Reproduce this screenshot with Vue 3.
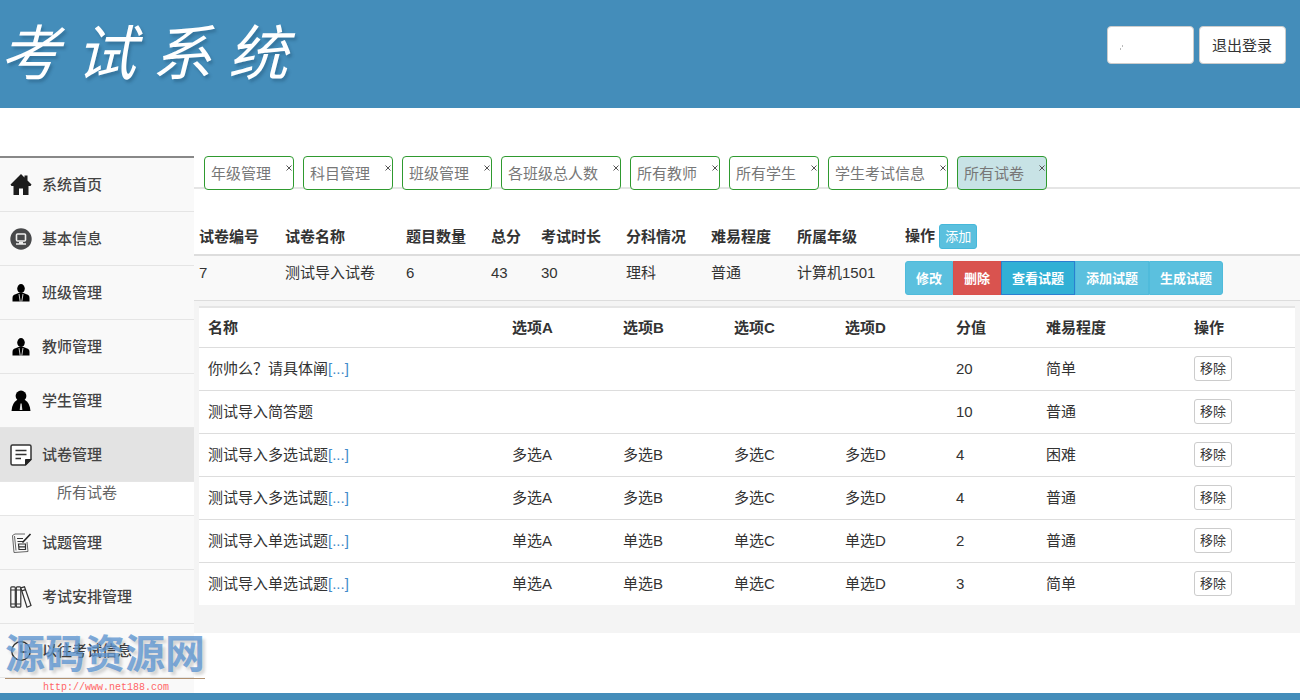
<script setup>
const logo = ['考', '试', '系', '统']

const menu = [
  { icon: 'home', label: '系统首页' },
  { icon: 'info', label: '基本信息' },
  { icon: 'person', label: '班级管理' },
  { icon: 'person', label: '教师管理' },
  { icon: 'student', label: '学生管理' },
  { icon: 'paper', label: '试卷管理', active: true, children: ['所有试卷'] },
  { icon: 'edit', label: '试题管理' },
  { icon: 'books', label: '考试安排管理' },
  { icon: 'clock', label: '以往考试信息' },
]

const tabs = ['年级管理', '科目管理', '班级管理', '各班级总人数', '所有教师', '所有学生', '学生考试信息', '所有试卷']

const share = (list) => {
  const total = list.reduce((a, b) => a + b, 0)
  return list.map((w) => (w / total) * 100 + '%')
}
const paperCols = share([86, 121, 85, 50, 85, 85, 86, 108, 400])
const questionCols = share([304, 111, 111, 111, 111, 90, 148, 110])

const paperHead = ['试卷编号', '试卷名称', '题目数量', '总分', '考试时长', '分科情况', '难易程度', '所属年级']
const paper = ['7', '测试导入试卷', '6', '43', '30', '理科', '普通', '计算机1501']
const actions = [
  { label: '修改', kind: 'info' },
  { label: '删除', kind: 'danger' },
  { label: '查看试题', kind: 'current' },
  { label: '添加试题', kind: 'info' },
  { label: '生成试题', kind: 'info' },
]

const questionHead = ['名称', '选项A', '选项B', '选项C', '选项D', '分值', '难易程度', '操作']
const questions = [
  { name: '你帅么？请具体阐', more: true, options: ['', '', '', ''], score: 20, level: '简单' },
  { name: '测试导入简答题', more: false, options: ['', '', '', ''], score: 10, level: '普通' },
  { name: '测试导入多选试题', more: true, options: ['多选A', '多选B', '多选C', '多选D'], score: 4, level: '困难' },
  { name: '测试导入多选试题', more: true, options: ['多选A', '多选B', '多选C', '多选D'], score: 4, level: '普通' },
  { name: '测试导入单选试题', more: true, options: ['单选A', '单选B', '单选C', '单选D'], score: 2, level: '普通' },
  { name: '测试导入单选试题', more: true, options: ['单选A', '单选B', '单选C', '单选D'], score: 3, level: '简单' },
]
</script>

<template>
  <div class="page">
    <header class="top">
      <h1 class="logo"><span v-for="c in logo" :key="c">{{ c }}</span></h1>
      <div class="account">
        <button type="button" class="btn-top" aria-label="当前用户">
          <svg width="4" height="6" viewBox="0 0 4 6"><path d="M0 5h1M2 2h1" stroke="#777" /></svg>
        </button>
        <button type="button" class="btn-top">退出登录</button>
      </div>
    </header>

    <div class="body">
      <nav class="side">
        <template v-for="m in menu" :key="m.label">
          <a href="#" class="item" :class="{ active: m.active }">
            <svg class="icon" width="22" height="22" viewBox="0 0 22 22" aria-hidden="true">
              <g v-if="m.icon === 'home'" fill="#1c1c1c">
                <path d="M11 0 0.5 10.5 1.5 12H3.5V21H9V14.5H13V21H18.5V12H20.5L21.5 10.5 17.5 6.5V1.5H14.5V3.5Z" />
              </g>
              <g v-else-if="m.icon === 'info'">
                <circle cx="11" cy="11" r="10.7" fill="#48494b" />
                <rect x="6.5" y="6" width="9" height="7" rx="1" fill="none" stroke="#eee" stroke-width="1.6" />
                <path d="M6 16H16M9 14.5H13" stroke="#eee" stroke-width="1.6" />
              </g>
              <g v-else-if="m.icon === 'person'">
                <ellipse cx="11" cy="6.6" rx="3.8" ry="4.5" />
                <path d="M2.5 19.5V16Q2.5 13 5.5 12.3L8.5 11H13.5L16.5 12.3Q19.5 13 19.5 16V19.5Z" />
                <path d="M9 12 10.2 19.5M13 12 11.8 19.5" stroke="#fff" stroke-width="0.8" />
              </g>
              <g v-else-if="m.icon === 'student'">
                <circle cx="11" cy="6" r="5.4" />
                <path d="M7 10H15Q20 13 20.5 21H1.5Q2 13 7 10Z" />
                <path d="M10.5 13.5H11.6L12.4 20H9.7Z" fill="#ddd" />
              </g>
              <g v-else-if="m.icon === 'paper'">
                <path d="M2.5 1H19.5Q21 1 21 2.5V15.5L15.5 21H2.5Q1 21 1 19.5V2.5Q1 1 2.5 1Z" fill="#fff" stroke="#333" stroke-width="1.5" />
                <path d="M5.5 6.5H16.5M5.5 10.5H16.5M5.5 14.5H11" stroke="#333" stroke-width="1.5" />
                <path d="M21 15.5H15.5V21Z" fill="#222" stroke="#222" />
              </g>
              <g v-else-if="m.icon === 'edit'" fill="none" stroke="#666" stroke-width="1">
                <path d="M2.5 3.5 5 2H15M2.5 3.5 4 20.5 18 19.5 17 10M4.5 4 6 18.5" />
                <path d="M7 6.5H13M7.5 9.5H14M8.5 12H15.5V17.5H9ZM9 14.8H15" stroke="#333" stroke-width="1.2" />
                <path d="M20.500 2 12.500 10.500" stroke="#222" stroke-width="1.600" />
              </g>
              <g v-else-if="m.icon === 'books'" fill="#fafafa" stroke="#333" stroke-width="1.2">
                <rect x="0.8" y="0.8" width="4.5" height="20.4" rx="1" />
                <rect x="6.3" y="0.8" width="4.5" height="20.4" rx="1" />
                <path d="M10.8 1.8 14.5 0.8 21 19.5 17 21.2Z" />
                <path d="M0.8 4H5.3M6.3 4H10.8M11.8 4.8 15.6 3.7M0.8 18H5.3M6.3 18H10.8" />
              </g>
              <g v-else fill="none" stroke="#333" stroke-width="1.3">
                <circle cx="11" cy="11" r="9.3" />
                <path d="M11 4.5V12H16.5" />
              </g>
            </svg>
            <span>{{ m.label }}</span>
          </a>
          <a v-for="c in m.children || []" :key="c" href="#" class="sub">{{ c }}</a>
        </template>
      </nav>

      <main class="main">
        <ul class="tabs">
          <li v-for="(t, i) in tabs" :key="t" class="tab" :class="{ on: i === tabs.length - 1 }">
            <a href="#">{{ t }}</a>
            <button type="button" class="close" :aria-label="'关闭' + t">
              <svg width="6" height="6" viewBox="0 0 6 6"><path d="M.5 .5 5.5 5.5M5.5 .5 .5 5.5" stroke="#555" stroke-width="1" /></svg>
            </button>
          </li>
        </ul>

        <table class="papers">
          <colgroup><col v-for="(w, i) in paperCols" :key="i" :style="{ width: w }" /></colgroup>
          <thead>
            <tr>
              <th v-for="h in paperHead" :key="h">{{ h }}</th>
              <th>操作 <button type="button" class="btn-add">添加</button></th>
            </tr>
          </thead>
          <tbody>
            <tr class="paper">
              <td v-for="(v, i) in paper" :key="i">{{ v }}</td>
              <td>
                <div class="group">
                  <button v-for="a in actions" :key="a.label" type="button" :class="a.kind">{{ a.label }}</button>
                </div>
              </td>
            </tr>
            <tr class="detail">
              <td colspan="9">
                <table class="questions">
                  <colgroup><col v-for="(w, i) in questionCols" :key="i" :style="{ width: w }" /></colgroup>
                  <thead>
                    <tr><th v-for="h in questionHead" :key="h">{{ h }}</th></tr>
                  </thead>
                  <tbody>
                    <tr v-for="(q, i) in questions" :key="i">
                      <td>{{ q.name }}<a v-if="q.more" href="#">[...]</a></td>
                      <td v-for="(o, k) in q.options" :key="k">{{ o }}</td>
                      <td>{{ q.score }}</td>
                      <td>{{ q.level }}</td>
                      <td><button type="button" class="btn-remove">移除</button></td>
                    </tr>
                  </tbody>
                </table>
              </td>
            </tr>
          </tbody>
        </table>
      </main>
    </div>

    <footer class="foot"></footer>

    <div class="mark">
      <strong>源码资源网</strong>
      <span>http://www.net188.com</span>
    </div>
  </div>
</template>

<style>
body {
  margin: 0;
}
</style>

<style scoped>
.page {
  position: relative;
  display: flex;
  flex-direction: column;
  min-height: 100vh;
  background: #fff;
  color: #333;
  font: 15px/21px "Liberation Sans", "Noto Sans CJK SC", sans-serif;
}
* {
  box-sizing: border-box;
}
button {
  font-family: inherit;
  cursor: pointer;
}
a {
  text-decoration: none;
}
.top {
  display: flex;
  justify-content: space-between;
  align-items: flex-start;
  height: 108px;
  background: #448dba;
}
.logo {
  display: flex;
  gap: 16px;
  margin: 10px 0 0;
  color: #fff;
  font-size: 60px;
  line-height: 90px;
  font-weight: 400;
  font-style: italic;
  text-shadow: 2px 3px 3px rgba(20, 60, 90, 0.3);
}
.account {
  display: flex;
  gap: 5px;
  padding: 26px 14px 0 0;
}
.btn-top {
  min-width: 87px;
  height: 38px;
  padding: 0 12px 2px;
  border: 1px solid #ccc;
  border-radius: 4px;
  background: #fff;
  color: #333;
  font-size: 15px;
  text-align: left;
}
.body {
  display: flex;
  flex: 1;
  padding-top: 48px;
}
.side {
  flex: 0 0 194px;
  border-top: 2px solid #888;
  background: #f9f9f9;
}
.item {
  display: flex;
  align-items: center;
  gap: 10px;
  height: 54px;
  padding-left: 10px;
  border-bottom: 1px solid #e5e5e5;
  color: #444;
  font-weight: 500;
}
.item.active {
  background: #e3e3e3;
}
.sub {
  display: block;
  height: 34px;
  padding-left: 57px;
  border-bottom: 1px solid #e5e5e5;
  background: #fff;
  color: #666;
  line-height: 22px;
}
.main {
  flex: 1;
  min-width: 0;
}
.tabs {
  display: flex;
  gap: 9px;
  height: 33px;
  margin: 0;
  padding: 0 0 0 10px;
  border-bottom: 2px solid #e5e5e5;
  list-style: none;
}
.tab {
  display: flex;
  justify-content: space-between;
  height: 34px;
  padding: 6px 1px 0 6px;
  border: 1px solid #2f9a2f;
  border-radius: 4px;
  background: #fff;
}
.tab a {
  color: #777;
}
.tab.on {
  background: #c8e3e6;
}
.close {
  display: flex;
  width: 6px;
  height: 6px;
  margin: 2px 0 0 15px;
  padding: 0;
  border: 0;
  background: none;
}
table {
  width: 100%;
  border-collapse: separate;
  border-spacing: 0;
  table-layout: fixed;
}
th {
  text-align: left;
  white-space: nowrap;
}
.papers {
  margin-top: 26px;
}
.papers > thead th {
  height: 41px;
  padding: 4px 5px 0;
  border-bottom: 2px solid #ddd;
}
.paper td {
  height: 45px;
  padding: 6px 5px 0;
  border-bottom: 1px solid #ddd;
  background: #f9f9f9;
  vertical-align: top;
}
.paper td:last-child {
  padding-top: 5px;
}
.btn-add {
  height: 25px;
  padding: 0 5px 2px;
  border: 1px solid #46b8da;
  border-radius: 3px;
  background: #5bc0de;
  color: #fff;
  font-size: 13px;
}
.group {
  display: flex;
}
.group button {
  height: 34px;
  padding: 0 10px 2px;
  border: 1px solid #4fbbdb;
  background: #5bc0de;
  color: #fff;
  font-size: 13px;
  font-weight: bold;
  white-space: nowrap;
}
.group button:first-child {
  border-radius: 3px 0 0 3px;
}
.group button:last-child {
  border-radius: 0 3px 3px 0;
}
.group .danger {
  border-color: #d9504b;
  background: #d9534f;
}
.group .current {
  border-color: #2a7fd0;
  background: #31b0d5;
}
.detail > td {
  padding: 5px 5px 28px;
  background: #f4f4f4;
}
.questions {
  border-top: 2px solid #e5e5e5;
  background: #fff;
}
.questions th {
  height: 39px;
  padding: 0 9px;
}
.questions td {
  height: 43px;
  padding: 0 9px 2px;
  border-top: 1px solid #ddd;
}
.questions a {
  color: #428bca;
}
.btn-remove {
  display: block;
  height: 25px;
  margin-top: 1px;
  padding: 0 5px 2px;
  border: 1px solid #ccc;
  border-radius: 3px;
  background: #fff;
  color: #333;
  font-size: 13px;
}
.foot {
  height: 7px;
  background: #448dba;
}
.mark {
  position: absolute;
  left: 5px;
  bottom: 4px;
  width: 200px;
}
.mark strong {
  display: block;
  border-bottom: 1px solid #b09070;
  color: rgba(92, 148, 208, 0.78);
  font-size: 40px;
  line-height: 48px;
  text-shadow: 3px 3px 3px rgba(0, 0, 0, 0.15);
  white-space: nowrap;
}
.mark span {
  display: block;
  padding-left: 38px;
  color: #f66;
  font: 10px/17px "Liberation Mono", monospace;
}
</style>
